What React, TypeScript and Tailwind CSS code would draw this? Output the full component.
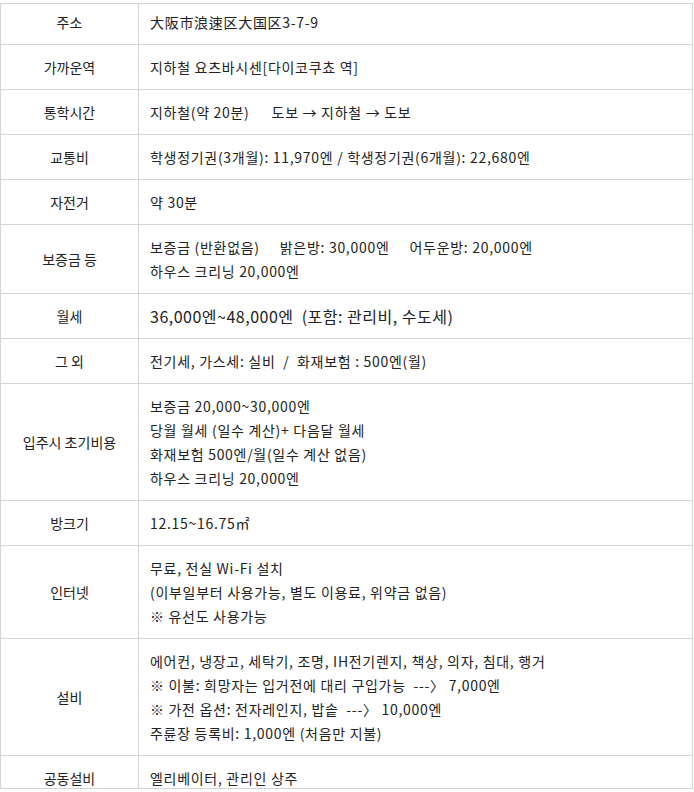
import React from 'react';

type Row = {
  label: string;
  lines: React.ReactNode[];
  big?: boolean;
};

const rows: Row[] = [
  { label: '주소', lines: ['大阪市浪速区大国区3-7-9'] },
  { label: '가까운역', lines: ['지하철 요츠바시센[다이코쿠쵸 역]'] },
  {
    label: '통학시간',
    lines: [
      <>
        지하철(약 20분)<span className="ml-[22px]">도보 → 지하철 → 도보</span>
      </>,
    ],
  },
  { label: '교통비', lines: ['학생정기권(3개월): 11,970엔 / 학생정기권(6개월): 22,680엔'] },
  { label: '자전거', lines: ['약 30분'] },
  {
    label: '보증금 등',
    lines: [
      <>
        보증금 (반환없음)<span className="ml-[20px]">밝은방: 30,000엔</span>
        <span className="ml-[20px]">어두운방: 20,000엔</span>
      </>,
      '하우스 크리닝 20,000엔',
    ],
  },
  { label: '월세', lines: ['36,000엔~48,000엔  (포함: 관리비, 수도세)'], big: true },
  { label: '그 외', lines: ['전기세, 가스세: 실비  /  화재보험 : 500엔(월)'] },
  {
    label: '입주시 초기비용',
    lines: [
      '보증금 20,000~30,000엔',
      '당월 월세 (일수 계산)+ 다음달 월세',
      '화재보험 500엔/월(일수 계산 없음)',
      '하우스 크리닝 20,000엔',
    ],
  },
  { label: '방크기', lines: ['12.15~16.75㎡'] },
  {
    label: '인터넷',
    lines: ['무료, 전실 Wi-Fi 설치', '(이부일부터 사용가능, 별도 이용료, 위약금 없음)', '※ 유선도 사용가능'],
  },
  {
    label: '설비',
    lines: [
      '에어컨, 냉장고, 세탁기, 조명, IH전기렌지, 책상, 의자, 침대, 행거',
      '※ 이불: 희망자는 입거전에 대리 구입가능  ---〉 7,000엔',
      '※ 가전 옵션: 전자레인지, 밥솥  ---〉 10,000엔',
      '주륜장 등록비: 1,000엔 (처음만 지불)',
    ],
  },
  { label: '공동설비', lines: ['엘리베이터, 관리인 상주'] },
];

const App: React.FC = () => {
  return (
    <div
      className="w-[694px] h-[792px] bg-white text-[#222] overflow-hidden"
      style={{ fontFamily: '"Noto Sans CJK KR", "Noto Sans", sans-serif' }}
    >
      <div className="mt-[3px] w-[693px] h-[786px] border border-[#d4d4d4] overflow-hidden">
        <div className="-mt-[4px]">
          {rows.map((row) => (
            <div key={row.label} className="flex border-b border-[#d4d4d4]">
              <div className="w-[138px] shrink-0 border-r border-[#d4d4d4] flex items-center justify-center text-[14px]">
                {row.label}
              </div>
              <div
                className={`flex-1 py-[10px] pl-[11px] leading-6 whitespace-pre ${
                  row.big ? 'text-[16px] tracking-[0.5px]' : 'text-[14px] tracking-[0.7px]'
                }`}
              >
                {row.lines.map((line, i) => (
                  <div key={i}>{line}</div>
                ))}
              </div>
            </div>
          ))}
        </div>
      </div>
    </div>
  );
};

export default App;
